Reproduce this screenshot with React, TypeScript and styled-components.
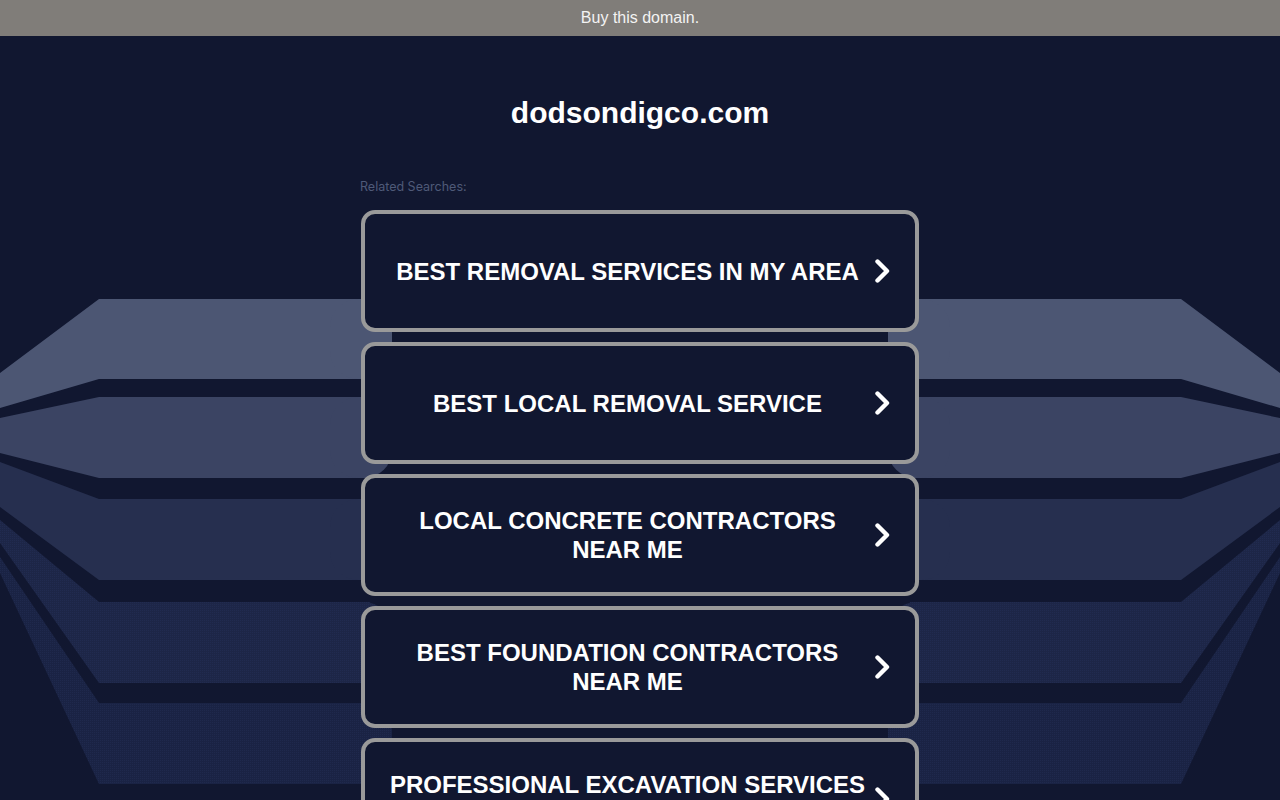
import styled, { createGlobalStyle } from "styled-components";

const GlobalStyle = createGlobalStyle`
  html, body {
    margin: 0;
    padding: 0;
    background: #111730;
  }
  body {
    font-family: "Liberation Sans", Arial, sans-serif;
  }
`;

const searches = [
  "BEST REMOVAL SERVICES IN MY AREA",
  "BEST LOCAL REMOVAL SERVICE",
  "LOCAL CONCRETE CONTRACTORS NEAR ME",
  "BEST FOUNDATION CONTRACTORS NEAR ME",
  "PROFESSIONAL EXCAVATION SERVICES NEAR ME",
];

// stacked planes behind the list: [top at x=99, top at x=0, bottom at x=99, bottom at x=0, fill]
const bands: [number, number, number, number, string][] = [
  [299, 373, 379, 408, "#4c5673"],
  [397, 418, 478, 453, "#3b4463"],
  [499, 462, 580, 507, "#262f4f"],
  [602, 520, 683, 543, "url(#dots4)"],
  [703, 557, 784, 573, "url(#dots5)"],
];

function Backdrop() {
  return (
    <BackdropSvg width="1280" height="800" viewBox="0 0 1280 800">
      <defs>
        <pattern id="dots4" width="2" height="2" patternUnits="userSpaceOnUse">
          <rect width="2" height="2" fill="#1d2647" />
          <rect width="1" height="1" fill="#212b50" />
        </pattern>
        <pattern id="dots5" width="2" height="2" patternUnits="userSpaceOnUse">
          <rect width="2" height="2" fill="#1a2344" />
          <rect width="1" height="1" fill="#1f294d" />
        </pattern>
      </defs>
      {bands.map(([t, t0, b, b0, fill], i) => (
        <g key={i} fill={fill}>
          <polygon points={`0,${t0} 99,${t} 370,${t} 370,${b} 99,${b} 0,${b0}`} />
          <rect x="330" y={t} width="62" height={b - t} rx="28" />
          <polygon
            points={`1280,${t0} 1181,${t} 910,${t} 910,${b} 1181,${b} 1280,${b0}`}
          />
          <rect x="888" y={t} width="62" height={b - t} rx="28" />
        </g>
      ))}
    </BackdropSvg>
  );
}

function Chevron() {
  return (
    <ChevronSvg width="16" height="26" viewBox="0 0 16 26">
      <polyline
        points="3.5,3.5 13,13 3.5,22.5"
        fill="none"
        stroke="#fff"
        strokeWidth="4.4"
        strokeLinecap="round"
        strokeLinejoin="round"
      />
    </ChevronSvg>
  );
}

export default function App() {
  return (
    <Page>
      <GlobalStyle />
      <Backdrop />
      <TopBar>Buy this domain.</TopBar>
      <Content>
        <Domain>dodsondigco.com</Domain>
        <List>
          <Related>Related Searches:</Related>
          {searches.map((s) => (
            <Card key={s} href="#">
              <Label>{s}</Label>
              <Chevron />
            </Card>
          ))}
        </List>
      </Content>
    </Page>
  );
}

const Page = styled.div`
  position: relative;
  min-height: 800px;
  overflow: hidden;
`;

const BackdropSvg = styled.svg`
  position: absolute;
  top: 0;
  left: 0;
  z-index: 0;
`;

const TopBar = styled.div`
  position: relative;
  z-index: 1;
  height: 36px;
  display: flex;
  align-items: center;
  justify-content: center;
  background: #807d79;
  color: #f3f3f3;
  font-size: 16px;
`;

const Content = styled.main`
  position: relative;
  z-index: 1;
  display: flex;
  flex-direction: column;
  align-items: center;
`;

const Domain = styled.h1`
  margin: 59px 0 0;
  font-size: 30px;
  line-height: 36px;
  font-weight: 700;
  color: #fff;
`;

const List = styled.div`
  width: 560px;
  margin-top: 48px;
  display: flex;
  flex-direction: column;
`;

const Related = styled.div`
  font-family: Inter, "Liberation Sans", sans-serif;
  font-size: 12.5px;
  line-height: 16px;
  color: #4f5a78;
  margin-bottom: 15px;
`;

const Card = styled.a`
  box-sizing: border-box;
  height: 122px;
  margin: 0 1px 10px;
  display: flex;
  align-items: center;
  gap: 4px;
  padding: 0 25px 0 20px;
  border: 4px solid #9a9a9a;
  border-radius: 14px;
  background: #111730;
  text-decoration: none;
`;

const Label = styled.span`
  flex: 1;
  text-align: center;
  color: #fff;
  font-size: 24px;
  line-height: 29px;
  font-weight: 700;
`;

const ChevronSvg = styled.svg`
  flex-shrink: 0;
`;
